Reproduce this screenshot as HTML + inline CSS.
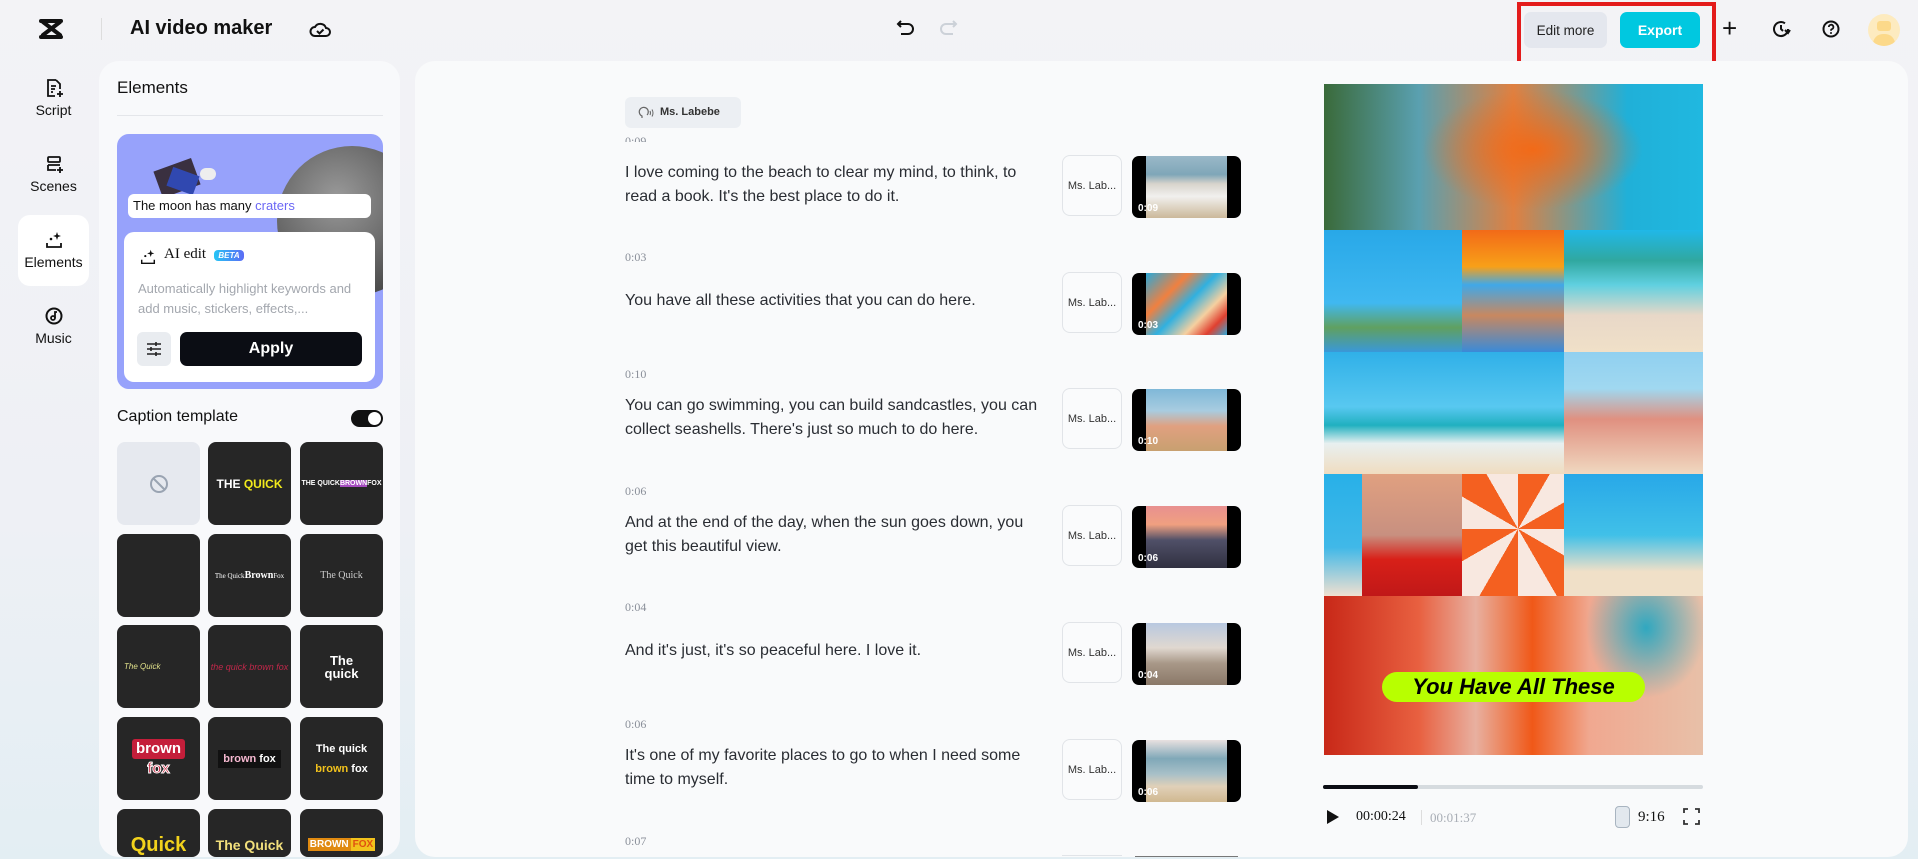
<!DOCTYPE html>
<html><head><meta charset="utf-8">
<style>
*{box-sizing:border-box;margin:0;padding:0}
html,body{width:1918px;height:859px;overflow:hidden}
body{font-family:"Liberation Sans",sans-serif;color:#111}
#root{position:relative;width:1918px;height:859px;overflow:hidden;background:linear-gradient(180deg,#f3f3f6 0%,#eef0f5 60%,#e3eef3 100%)}
.abs{position:absolute}
.nav{position:absolute;left:18px;width:71px;text-align:center;font-size:14px;color:#111}
.nav svg{display:block;margin:0 auto 4px}
.panel{position:absolute;left:99px;top:61px;width:301px;height:796px;background:#f8f9fb;border-radius:20px;overflow:hidden}
.main{position:absolute;left:415px;top:61px;width:1493px;height:796px;background:#f9fafb;border-radius:20px;overflow:hidden}
.cell{position:absolute;width:83px;height:83px;border-radius:8px;background:#262626;overflow:hidden;color:#fff;display:flex;align-items:center;justify-content:center;text-align:center}
.ts{position:absolute;left:210px;font-size:12px;color:#8a8f99;font-family:"Liberation Serif",serif}
.tx{position:absolute;left:210px;font-size:16px;line-height:24px;color:#2a2d33;width:415px}
.ml{position:absolute;left:647px;width:60px;height:61px;border:1px solid #e1e4e8;border-radius:8px;font-size:11px;color:#333;display:flex;align-items:center;justify-content:center;background:#fafbfc}
.th{position:absolute;left:717px;width:109px;height:62px;border-radius:7px;background:#000;overflow:hidden}
.th .im{position:absolute;left:14px;right:14px;top:0;bottom:0}
.th span{position:absolute;left:6px;bottom:4px;font-size:10px;color:#fff;font-weight:bold}
</style></head><body><div id="root">

<!-- top bar -->
<svg class="abs" style="left:38px;top:18px" width="28" height="22" viewBox="0 0 28 22"><path d="M3 3h20M3 19h20M5 4l17 13M22 4L5 17" stroke="#111" stroke-width="4" fill="none" stroke-linecap="round"/></svg>
<div class="abs" style="left:101px;top:18px;width:1px;height:22px;background:#ddd"></div>
<div class="abs" style="left:130px;top:17px;font-size:20px;font-weight:bold">AI video maker</div>
<svg class="abs" style="left:309px;top:19px" width="22" height="20" viewBox="0 0 22 20"><path d="M6 17h11a4 4 0 0 0 0-8 6 6 0 0 0-11-1 4.5 4.5 0 0 0 0 9z" fill="none" stroke="#111" stroke-width="2"/><path d="M8 12l2.5 2.5 4-4" fill="none" stroke="#111" stroke-width="2"/></svg>
<svg class="abs" style="left:896px;top:19px" width="20" height="18" viewBox="0 0 20 18"><path d="M5 2L2 5l3 3M2 5h10a5 5 0 0 1 0 10H5" fill="none" stroke="#111" stroke-width="2"/></svg>
<svg class="abs" style="left:938px;top:19px" width="20" height="18" viewBox="0 0 20 18"><path d="M15 2l3 3-3 3M18 5H8a5 5 0 0 0 0 10h7" fill="none" stroke="#ccd1d8" stroke-width="2"/></svg>

<div class="abs" style="left:1517px;top:2px;width:199px;height:63px;border:4px solid #e31b1b"></div>
<div class="abs" style="left:1524px;top:12px;width:83px;height:36px;background:#e4e7ee;border-radius:7px;font-size:13.5px;display:flex;align-items:center;justify-content:center;color:#222">Edit more</div>
<div class="abs" style="left:1620px;top:12px;width:80px;height:36px;background:#00c8e0;border-radius:7px;font-size:14px;font-weight:bold;color:#fff;display:flex;align-items:center;justify-content:center">Export</div>
<div class="abs" style="left:1722px;top:13px;font-size:26px;font-weight:300">+</div>
<svg class="abs" style="left:1771px;top:19px" width="20" height="20" viewBox="0 0 20 20"><path d="M17 10a7 7 0 1 1-3-5.7" fill="none" stroke="#111" stroke-width="2"/><path d="M10 6v4l2 2" fill="none" stroke="#111" stroke-width="2"/><path d="M14 11l3 3 2-3" fill="none" stroke="#111" stroke-width="2"/></svg>
<svg class="abs" style="left:1821px;top:19px" width="20" height="20" viewBox="0 0 20 20"><circle cx="10" cy="10" r="7.5" fill="none" stroke="#111" stroke-width="2"/><path d="M7.8 8a2.3 2.3 0 1 1 3 2.2c-.7.3-.8.8-.8 1.5" fill="none" stroke="#111" stroke-width="1.8"/><circle cx="10" cy="14" r="1" fill="#111"/></svg>
<div class="abs" style="left:1868px;top:14px;width:32px;height:32px;border-radius:50%;background:#fdebc0;overflow:hidden"><div class="abs" style="left:9px;top:7px;width:14px;height:10px;background:#fcd98a;border-radius:3px"></div><div class="abs" style="left:5px;top:20px;width:22px;height:12px;background:#fcd98a;border-radius:10px 10px 0 0"></div></div>

<!-- left nav -->
<div class="nav" style="top:78px"><svg width="20" height="20" viewBox="0 0 20 20"><path d="M12 2H4v16h7M12 2l4 4v5" fill="none" stroke="#111" stroke-width="1.8"/><path d="M7 8h5M7 11h4M7 14h2" stroke="#111" stroke-width="1.8"/><path d="M16 13v6M13 16h6" stroke="#111" stroke-width="1.8"/></svg>Script</div>
<div class="nav" style="top:154px"><svg width="20" height="20" viewBox="0 0 20 20"><rect x="4" y="3" width="12" height="5" rx="1" fill="none" stroke="#111" stroke-width="1.8"/><path d="M4 11v5h8" fill="none" stroke="#111" stroke-width="1.8"/><path d="M4 11h12M16 13v6M13 16h6" stroke="#111" stroke-width="1.8"/></svg>Scenes</div>
<div class="abs" style="left:18px;top:215px;width:71px;height:71px;background:#fff;border-radius:12px"></div>
<div class="nav" style="top:230px"><svg width="20" height="20" viewBox="0 0 20 20"><path d="M3 13v4h14v-4" fill="none" stroke="#111" stroke-width="1.8"/><path d="M13 2l1 3 3 1-3 1-1 3-1-3-3-1 3-1z" fill="#111"/><circle cx="7" cy="9" r="1.3" fill="#111"/></svg>Elements</div>
<div class="nav" style="top:306px"><svg width="20" height="20" viewBox="0 0 20 20"><circle cx="10" cy="10" r="7.5" fill="none" stroke="#111" stroke-width="2"/><circle cx="9" cy="12" r="2" fill="none" stroke="#111" stroke-width="1.8"/><path d="M11 12V6h2" fill="none" stroke="#111" stroke-width="1.8"/></svg>Music</div>

<!-- elements panel -->
<div class="panel">
 <div class="abs" style="left:18px;top:17px;font-size:17px;font-weight:500">Elements</div>
 <div class="abs" style="left:18px;top:54px;width:266px;height:1px;background:#e4e6ea"></div>
 <div class="abs" style="left:18px;top:73px;width:266px;height:255px;background:#97a2fb;border-radius:12px;overflow:hidden">
  <div class="abs" style="left:160px;top:12px;width:150px;height:150px;border-radius:50%;background:radial-gradient(circle at 40% 35%,#9a9a9a,#5c5c5c 60%,#333)"></div>
  <div class="abs" style="left:40px;top:30px;width:40px;height:28px;background:#3a3040;transform:rotate(-20deg)"></div>
  <div class="abs" style="left:52px;top:37px;width:28px;height:20px;background:#3048b0;transform:rotate(20deg)"></div>
  <div class="abs" style="left:83px;top:34px;width:16px;height:12px;border-radius:6px;background:#eee"></div>
  <div class="abs" style="left:11px;top:60px;width:243px;height:24px;background:#fff;border-radius:6px;font-size:13px;padding:4px 5px">The moon has many <span style="color:#6b67f5">craters</span></div>
  <div class="abs" style="left:7px;top:98px;width:251px;height:150px;background:#fff;border-radius:10px">
   <svg class="abs" style="left:15px;top:16px" width="18" height="18" viewBox="0 0 20 20"><path d="M3 13v4h14v-4" fill="none" stroke="#111" stroke-width="1.6"/><path d="M13 2l1 3 3 1-3 1-1 3-1-3-3-1 3-1z" fill="#111"/><circle cx="7" cy="9" r="1.2" fill="#111"/></svg>
   <div class="abs" style="left:40px;top:14px;font-family:'Liberation Serif',serif;font-size:15px">AI edit</div>
   <div class="abs" style="left:90px;top:18px;width:30px;height:11px;background:linear-gradient(90deg,#25c5f5,#5c6cf5);border-radius:4px;font-size:8px;color:#fff;font-style:italic;font-weight:bold;text-align:center;line-height:11px">BETA</div>
   <div class="abs" style="left:14px;top:47px;font-size:13px;line-height:20px;color:#a3a7ae;width:230px">Automatically highlight keywords and add music, stickers, effects,...</div>
   <div class="abs" style="left:13px;top:100px;width:34px;height:34px;background:#e9ecf0;border-radius:6px"><svg class="abs" style="left:8px;top:8px" width="18" height="18" viewBox="0 0 18 18"><path d="M2 4h14M2 9h14M2 14h14" stroke="#222" stroke-width="1.6"/><path d="M11 2v4M6 7v4M11 12v4" stroke="#222" stroke-width="1.6"/></svg></div>
   <div class="abs" style="left:56px;top:100px;width:182px;height:34px;background:#0b0d14;border-radius:7px;color:#fff;font-size:16px;font-weight:bold;text-align:center;line-height:34px">Apply</div>
  </div>
 </div>
 <div class="abs" style="left:18px;top:347px;font-size:16px">Caption template</div>
 <div class="abs" style="left:252px;top:349px;width:32px;height:17px;background:#111;border-radius:9px"><div class="abs" style="left:17px;top:2px;width:13px;height:13px;border-radius:50%;background:#fff"></div></div>
</div>
<!-- caption cells -->
<div class="cell" style="left:117px;top:442px;background:#e6e9ef"><svg width="20" height="20" viewBox="0 0 20 20"><circle cx="10" cy="10" r="8" fill="none" stroke="#9aa4b2" stroke-width="2"/><path d="M4.5 4.5l11 11" stroke="#9aa4b2" stroke-width="2"/></svg></div>
<div class="cell" style="left:208px;top:442px;font-weight:bold;font-size:12px">THE&nbsp;<span style="color:#f2ea1c">QUICK</span></div>
<div class="cell" style="left:300px;top:442px;font-weight:bold;font-size:7px">THE QUICK <span style="background:#a64cc0">BROWN</span> FOX</div>
<div class="cell" style="left:117px;top:534px"></div>
<div class="cell" style="left:208px;top:534px;font-family:'Liberation Serif',serif;font-size:7px">The Quick <b style="font-size:10px">Brown</b> Fox</div>
<div class="cell" style="left:300px;top:534px;font-family:'Liberation Serif',serif;font-size:10px;color:#ccc">The Quick</div>
<div class="cell" style="left:117px;top:625px;font-style:italic;font-size:8px;color:#e0e08a;justify-content:flex-start;padding-left:7px">The Quick</div>
<div class="cell" style="left:208px;top:625px;font-style:italic;font-size:9px;color:#c0284a">the quick brown fox</div>
<div class="cell" style="left:300px;top:625px;font-weight:bold;font-size:13px;line-height:13px">The<br>quick</div>
<div class="cell" style="left:117px;top:717px;font-weight:bold;font-size:15px;line-height:20px;flex-direction:column"><span style="background:#c41e3a;padding:0 4px;border-radius:3px">brown</span><span style="color:#c41e3a;-webkit-text-stroke:1px #fff">fox</span></div>
<div class="cell" style="left:208px;top:717px;font-weight:bold;font-size:11px"><span style="background:#111;padding:3px 5px"><span style="color:#f5b8d0">brown</span> fox</span></div>
<div class="cell" style="left:300px;top:717px;font-weight:bold;font-size:11px;line-height:20px;flex-direction:column"><span>The quick</span><span><span style="color:#f2c21c">brown</span> fox</span></div>
<div class="cell" style="left:117px;top:809px;height:48px;font-weight:bold;font-size:20px;color:#f2d21c;align-items:flex-end">Quick</div>
<div class="cell" style="left:208px;top:809px;height:48px;font-weight:bold;font-size:14px;color:#f2e07c;align-items:flex-end;padding-bottom:4px">The Quick</div>
<div class="cell" style="left:300px;top:809px;height:48px;font-weight:bold;font-size:10px;align-items:flex-end;padding-bottom:6px"><span style="background:#e08a10;padding:1px 2px">BROWN</span><span style="background:#f2c21c;color:#e05010;padding:1px 2px">FOX</span></div>

<!-- main -->
<div class="main">
<div class="abs" style="left:210px;top:36px;width:116px;height:31px;background:#eceff3;border-radius:6px;font-size:11px;font-weight:bold;color:#333;padding:9px 0 0 35px">Ms. Labebe</div>
<svg class="abs" style="left:222px;top:43px" width="18" height="18" viewBox="0 0 18 18"><path d="M5 14v-2a4.5 4.5 0 1 1 5-1" fill="none" stroke="#666" stroke-width="1.2"/><path d="M13 7q1 2 0 4M15 5.5q2 3.5 0 7" fill="none" stroke="#666" stroke-width="1"/></svg>
<div class="ts" style="top:73px;height:8px;overflow:hidden">0:09</div>

<div class="tx" style="top:100px">I love coming to the beach to clear my mind, to think, to read a book. It's the best place to do it.</div>
<div class="ts" style="top:189px">0:03</div>
<div class="tx" style="top:228px">You have all these activities that you can do here.</div>
<div class="ts" style="top:306px">0:10</div>
<div class="tx" style="top:333px">You can go swimming, you can build sandcastles, you can collect seashells. There's just so much to do here.</div>
<div class="ts" style="top:423px">0:06</div>
<div class="tx" style="top:450px">And at the end of the day, when the sun goes down, you get this beautiful view.</div>
<div class="ts" style="top:539px">0:04</div>
<div class="tx" style="top:578px">And it's just, it's so peaceful here. I love it.</div>
<div class="ts" style="top:656px">0:06</div>
<div class="tx" style="top:683px">It's one of my favorite places to go to when I need some time to myself.</div>
<div class="ts" style="top:773px">0:07</div>

<div class="ml" style="top:94px">Ms. Lab...</div><div class="th" style="top:95px"><div class="im" style="background:linear-gradient(180deg,#9ab8c8 0%,#7fa6b8 30%,#d8d4cc 45%,#f1f0ee 65%,#cbb89a 100%)"></div><span>0:09</span></div>
<div class="ml" style="top:211px">Ms. Lab...</div><div class="th" style="top:212px"><div class="im" style="background:linear-gradient(135deg,#2aa8d8,#f08040 30%,#30b0e0 50%,#f5d0a0 70%,#e04030 85%,#30a8d8)"></div><span>0:03</span></div>
<div class="ml" style="top:327px">Ms. Lab...</div><div class="th" style="top:328px"><div class="im" style="background:linear-gradient(180deg,#7fb8d8 0%,#a8cce0 35%,#e0a080 60%,#c8a070 100%)"></div><span>0:10</span></div>
<div class="ml" style="top:444px">Ms. Lab...</div><div class="th" style="top:445px"><div class="im" style="background:linear-gradient(180deg,#e89090 0%,#f0a080 30%,#505068 55%,#303040 100%)"></div><span>0:06</span></div>
<div class="ml" style="top:561px">Ms. Lab...</div><div class="th" style="top:562px"><div class="im" style="background:linear-gradient(180deg,#b8c8e0 0%,#e0d8d0 40%,#a89888 65%,#8a7868 100%)"></div><span>0:04</span></div>
<div class="ml" style="top:678px">Ms. Lab...</div><div class="th" style="top:679px"><div class="im" style="background:linear-gradient(180deg,#e8e0e0 0%,#80a8b8 30%,#a8c0c8 55%,#e0d0b8 75%,#d0b890 100%)"></div><span>0:06</span></div>
<div class="abs" style="left:647px;top:794px;width:60px;height:2px;border-top:1px solid #e1e4e8"></div>
<div class="abs" style="left:720px;top:795px;width:103px;height:1px;background:#777"></div>
</div>

<!-- preview -->
<div class="abs" style="left:1324px;top:84px;width:379px;height:671px;overflow:hidden;background:#e06040">
 <div class="abs" style="left:0;top:0;width:379px;height:146px;background:radial-gradient(ellipse 110px 60px at 55% 45%,#f26a18,rgba(242,106,24,0) 100%),linear-gradient(90deg,#3a6a3a,#5aa0b0 25%,#e08040 50%,#20b0d8 80%,#20b8e0)"></div>
 <div class="abs" style="left:0;top:146px;width:138px;height:122px;background:linear-gradient(180deg,#28a8e8,#40b8f0 60%,#60a060 80%,#3a98d8)"></div>
 <div class="abs" style="left:138px;top:146px;width:102px;height:122px;background:linear-gradient(180deg,#f26a18 0%,#f8a018 30%,#40a8e8 45%,#c88860 70%,#3a8ad8)"></div>
 <div class="abs" style="left:240px;top:146px;width:139px;height:122px;background:linear-gradient(180deg,#20b8e8 0%,#30a8a0 25%,#60d0e0 45%,#e8d8c8 70%,#f0e0c8)"></div>
 <div class="abs" style="left:0;top:268px;width:240px;height:122px;background:linear-gradient(180deg,#30b0e8 0%,#58c8f0 45%,#20b0c0 60%,#e8f0f0 75%,#f0dcc0 100%)"></div>
 <div class="abs" style="left:240px;top:268px;width:139px;height:122px;background:linear-gradient(180deg,#90d0f0 0%,#a0d8f0 30%,#e09080 55%,#f0d8c0 100%)"></div>
 <div class="abs" style="left:0;top:390px;width:38px;height:122px;background:linear-gradient(180deg,#28b0e8,#40b8e8 60%,#f0e0d0)"></div>
 <div class="abs" style="left:38px;top:390px;width:100px;height:122px;background:linear-gradient(180deg,#e0a080 0%,#c89080 50%,#d82018 70%,#c01818)"></div>
 <div class="abs" style="left:138px;top:390px;width:102px;height:122px;background:repeating-conic-gradient(from 0deg at 55% 45%,#f46020 0 30deg,#f8e8e0 30deg 60deg)"></div>
 <div class="abs" style="left:240px;top:390px;width:139px;height:122px;background:linear-gradient(180deg,#28a8e8,#40c0e8 50%,#f0e0c8 80%)"></div>
 <div class="abs" style="left:0;top:512px;width:379px;height:159px;background:radial-gradient(ellipse 60px 70px at 85% 20%,#30a8c0,rgba(48,168,192,0)),linear-gradient(90deg,#c82818 0%,#e86040 25%,#e8b0a0 40%,#f05818 55%,#f0a890 70%,#e8c0a8 100%)"></div>
 <div class="abs" style="left:58px;top:588px;width:263px;height:30px;background:#b8ff00;border-radius:15px;text-align:center;font-weight:bold;font-style:italic;font-size:22px;line-height:30px;color:#000">You Have All These</div>
</div>
<div class="abs" style="left:1323px;top:785px;width:380px;height:4px;background:#d6dbdf;border-radius:2px"><div style="width:95px;height:4px;background:#0b0d14;border-radius:2px"></div></div>
<svg class="abs" style="left:1326px;top:809px" width="14" height="16" viewBox="0 0 14 16"><path d="M1 1l12 7-12 7z" fill="#111"/></svg>
<div class="abs" style="left:1356px;top:809px;font-family:'Liberation Serif',serif;font-size:14px">00:00:24</div>
<div class="abs" style="left:1421px;top:810px;width:1px;height:15px;background:#ddd"></div>
<div class="abs" style="left:1430px;top:810px;font-family:'Liberation Serif',serif;font-size:13px;color:#a8adb5">00:01:37</div>
<div class="abs" style="left:1615px;top:806px;width:15px;height:22px;border:1.5px solid #a8b4c0;border-radius:4px;background:#e2e8ee"></div>
<div class="abs" style="left:1638px;top:809px;font-family:'Liberation Serif',serif;font-size:15px">9:16</div>
<svg class="abs" style="left:1683px;top:808px" width="17" height="17" viewBox="0 0 17 17"><path d="M1 5V1h4M12 1h4v4M16 12v4h-4M5 16H1v-4" fill="none" stroke="#333" stroke-width="1.8"/></svg>
</div></body></html>
